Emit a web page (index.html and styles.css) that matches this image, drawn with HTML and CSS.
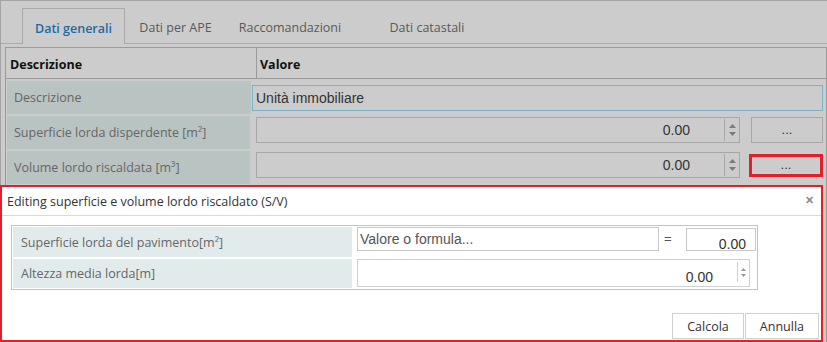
FILE: index.html
```html
<!DOCTYPE html>
<html lang="it">
<head>
    <meta charset="UTF-8">
    <title>Dati generali</title>
    <link rel="stylesheet" href="styles.css">
</head>
<body>
    <div class="window">
        <div class="tabs">
            <div class="tab tab-general active">Dati generali</div>
            <div class="tab tab-ape">Dati per APE</div>
            <div class="tab tab-racc">Raccomandazioni</div>
            <div class="tab tab-cat">Dati catastali</div>
        </div>

        <div class="grid">
            <div class="grid-head">
                <div class="head-label">Descrizione</div>
                <div class="head-value">Valore</div>
            </div>

            <div class="grid-row">
                <div class="cell-label">Descrizione</div>
                <div class="cell-value">
                    <div class="text-box">Unità immobiliare</div>
                </div>
            </div>

            <div class="grid-row">
                <div class="cell-label">Superficie lorda disperdente [m²]</div>
                <div class="cell-value cell-number">
                    <div class="num-box">
                        <span class="num-text">0.00</span>
                        <span class="spin">
                            <svg width="9" height="18" viewBox="0 0 9 18"><path d="M1 7 L4.5 3 L8 7 Z M1 11 L8 11 L4.5 15 Z" fill="#7a7a7a"/></svg>
                        </span>
                    </div>
                    <div class="dots-btn">...</div>
                </div>
            </div>

            <div class="grid-row">
                <div class="cell-label">Volume lordo riscaldata [m³]</div>
                <div class="cell-value cell-number">
                    <div class="num-box">
                        <span class="num-text">0.00</span>
                        <span class="spin">
                            <svg width="9" height="18" viewBox="0 0 9 18"><path d="M1 7 L4.5 3 L8 7 Z M1 11 L8 11 L4.5 15 Z" fill="#7a7a7a"/></svg>
                        </span>
                    </div>
                    <div class="dots-btn highlighted">...</div>
                </div>
            </div>
        </div>
    </div>

    <div class="dialog">
        <div class="dialog-title">
            <span>Editing superficie e volume lordo riscaldato (S/V)</span>
            <span class="close">&#x2715;</span>
        </div>
        <div class="dialog-body">
            <div class="form-table">
                <div class="form-row">
                    <div class="form-label">Superficie lorda del pavimento[m²]</div>
                    <div class="form-value">
                        <div class="formula-box">Valore o formula...</div>
                        <span class="equals">=</span>
                        <div class="result-box">0.00</div>
                    </div>
                </div>
                <div class="form-row">
                    <div class="form-label">Altezza media lorda[m]</div>
                    <div class="form-value">
                        <div class="height-box">
                            <span class="num-text">0.00</span>
                            <span class="spin small">
                                <svg width="7" height="14" viewBox="0 0 7 14"><path d="M1 6 L3.5 3 L6 6 Z M1 9 L6 9 L3.5 12 Z" fill="#9a9a9a"/></svg>
                            </span>
                        </div>
                    </div>
                </div>
            </div>
        </div>
        <div class="dialog-footer">
            <div class="btn">Calcola</div>
            <div class="btn">Annulla</div>
        </div>
    </div>
</body>
</html>
```

FILE: styles.css
```css
body {
    margin: 0;
    width: 827px;
    height: 342px;
    overflow: hidden;
    background-color: #cccccc;
    font-family: 'Open Sans', sans-serif;
    position: relative;
}

.window {
    height: 342px;
    box-sizing: border-box;
    border-top: 1px solid #a4a4a4;
    border-left: 1px solid #a4a4a4;
}

/* tabs */
.tabs {
    display: flex;
    align-items: flex-end;
    height: 42px;
    padding-left: 21px;
    border-bottom: 1px solid #a9a9a9;
}

.tab {
    height: 35px;
    padding-top: 3px;
    display: flex;
    align-items: center;
    justify-content: center;
    font-size: 12.5px;
    color: #595959;
    box-sizing: border-box;
}

.tab.active {
    height: 36px;
    margin-bottom: -1px;
    border: 1px solid #a9a9a9;
    border-bottom: none;
    background-color: #cccccc;
    color: #1d6aa6;
    font-weight: 600;
}

.tab-general { width: 103px; }
.tab-ape { width: 101px; }
.tab-racc { width: 128px; }
.tab-cat { width: 146px; }

/* grid */
.grid {
    margin: 3px 0 0 4px;
    width: 822px;
    height: 300px;
    box-sizing: border-box;
    border: 1px solid #9b9b9b;
    border-bottom: none;
}

.grid-head {
    display: flex;
    height: 30px;
    border-bottom: 1px solid #9b9b9b;
    font-size: 12.5px;
    font-weight: 700;
    color: #111;
}

.head-label {
    width: 246px;
    padding: 2px 0 0 4px;
    border-right: 1px solid #9b9b9b;
    display: flex;
    align-items: center;
}

.head-value {
    padding: 2px 0 0 3px;
    display: flex;
    align-items: center;
}

.grid-row {
    display: flex;
    height: 33px;
    margin-top: 2px;
}

.grid-row:first-of-type {
    margin-top: 1px;
}

.cell-label {
    width: 237px;
    margin-left: 1px;
    padding-left: 7px;
    background-color: #b9c3c1;
    color: #666666;
    font-size: 12.5px;
    display: flex;
    align-items: center;
}

.cell-value {
    flex: 1;
    padding: 4px 3px 0 1px;
    box-sizing: border-box;
}

.cell-number {
    display: flex;
    padding: 1px 3px 0 6px;
}

.text-box {
    height: 26px;
    box-sizing: border-box;
    border: 1px solid #7ab2c6;
    padding-left: 3px;
    font-family: 'Liberation Sans', Arial, sans-serif;
    font-size: 14px;
    color: #333;
    display: flex;
    align-items: center;
}

.num-box {
    width: 484px;
    height: 26px;
    box-sizing: border-box;
    border: 1px solid #a7a7a7;
    display: flex;
    align-items: center;
    justify-content: flex-end;
}

.num-text {
    font-family: 'Liberation Sans', Arial, sans-serif;
    font-size: 14px;
    color: #333;
    padding-right: 34px;
}

.spin {
    width: 14px;
    height: 22px;
    border-left: 1px solid #a7a7a7;
    display: flex;
    align-items: center;
    justify-content: center;
}

.dots-btn {
    width: 72px;
    height: 26px;
    margin-left: 11px;
    box-sizing: border-box;
    border: 1px solid #a7a7a7;
    display: flex;
    align-items: flex-end;
    justify-content: center;
    padding-bottom: 5px;
    font-family: 'Liberation Sans', Arial, sans-serif;
    font-size: 13px;
    color: #333;
}

.dots-btn.highlighted {
    width: 74px;
    height: 23px;
    margin: 2px 0 0 9px;
    border: 3px solid #e3202a;
    padding-bottom: 2px;
}

/* dialog */
.dialog {
    position: absolute;
    left: 0;
    top: 185px;
    width: 823px;
    height: 157px;
    box-sizing: border-box;
    border: 2px solid #e3202a;
    background-color: #ffffff;
    display: flex;
    flex-direction: column;
}

.dialog-title {
    height: 28px;
    border-bottom: 1px solid #d9d9d9;
    display: flex;
    align-items: center;
    justify-content: space-between;
    padding: 0 7px 0 5px;
    font-size: 12.5px;
    color: #333;
}

.close {
    font-size: 11px;
    font-weight: 700;
    color: #8a8a8a;
    margin-top: -4px;
}

.dialog-body {
    padding: 9px 0 0 9px;
}

.form-table {
    width: 747px;
    box-sizing: border-box;
    border: 1px solid #c3c3c3;
    padding: 1px;
}

.form-row {
    display: flex;
    height: 30px;
}

.form-row + .form-row {
    margin-top: 2px;
    height: 29px;
}

.form-label {
    width: 331px;
    padding-left: 8px;
    background-color: #e2ebec;
    color: #666666;
    font-size: 12.5px;
    display: flex;
    align-items: center;
}

.form-value {
    flex: 1;
    display: flex;
    align-items: flex-start;
    padding-left: 5px;
}

.formula-box {
    width: 302px;
    height: 24px;
    box-sizing: border-box;
    border: 1px solid #c8c8c8;
    padding-left: 2px;
    font-family: 'Liberation Sans', Arial, sans-serif;
    font-size: 14px;
    color: #555;
    display: flex;
    align-items: center;
}

.equals {
    width: 27px;
    padding-left: 5px;
    box-sizing: border-box;
    font-family: 'Liberation Sans', Arial, sans-serif;
    font-size: 13px;
    color: #555;
    line-height: 24px;
}

.result-box {
    width: 70px;
    height: 23px;
    margin-top: 1px;
    box-sizing: border-box;
    border: 1px solid #c8c8c8;
    padding: 7px 9px 0 0;
    text-align: right;
    font-family: 'Liberation Sans', Arial, sans-serif;
    font-size: 14px;
    line-height: 16px;
    color: #333;
}

.height-box {
    width: 393px;
    height: 28px;
    box-sizing: border-box;
    border: 1px solid #d0d0d0;
    display: flex;
    justify-content: flex-end;
    align-items: flex-end;
}

.height-box .num-text {
    padding-right: 24px;
    line-height: 18px;
}

.spin.small {
    width: 11px;
    height: 20px;
    align-self: flex-start;
    margin-top: 2px;
    border-left: 1px solid #d0d0d0;
}

.dialog-footer {
    margin-top: auto;
    display: flex;
    justify-content: flex-end;
    gap: 1px;
    padding: 0 2px 1px 0;
}

.btn {
    height: 26px;
    padding: 0 14px;
    box-sizing: border-box;
    border: 1px solid #cfcfcf;
    background-color: #fff;
    font-size: 12.5px;
    color: #333;
    display: flex;
    align-items: center;
}
```
